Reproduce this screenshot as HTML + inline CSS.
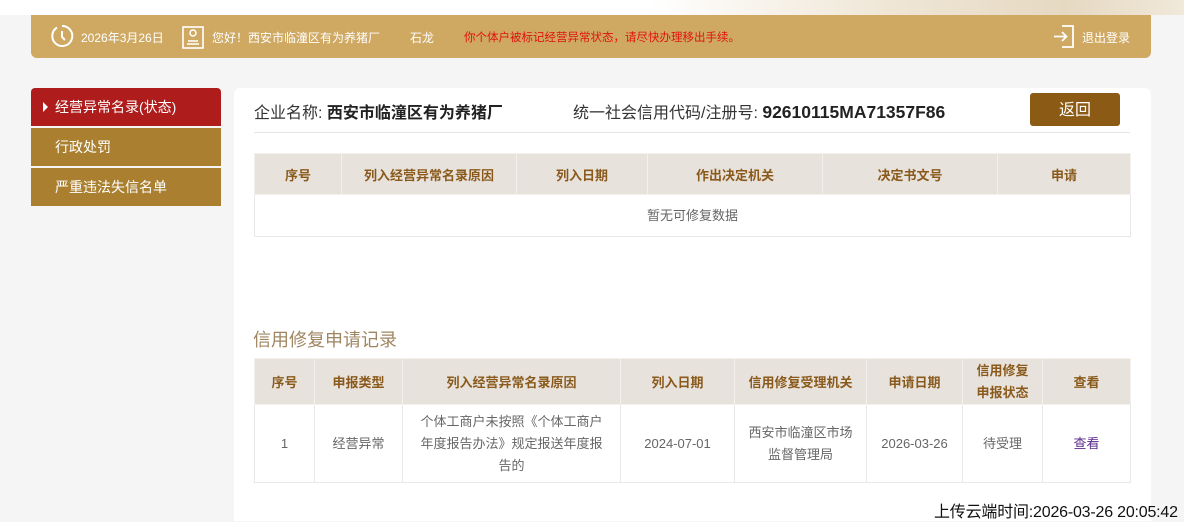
<!DOCTYPE html>
<html><head><meta charset="utf-8"><style>
*{margin:0;padding:0;box-sizing:border-box}
body{width:1184px;height:521px;overflow:hidden;background:#f5f5f5;font-family:"Liberation Sans","Noto Sans CJK SC",sans-serif;position:relative;font-size:13px}
.topbg{position:absolute;left:0;top:0;width:1184px;height:15px;background:linear-gradient(90deg,#fff 0,#fff 55%,#efe6d6 75%,#e6d9c2 90%,#f0e8da 100%)}
.hdr{position:absolute;left:31px;top:15px;width:1120px;height:43px;background:#cfa862;border-radius:0 0 6px 6px;color:#fff;font-size:12px}
.hdr span{position:absolute;top:14px;white-space:nowrap}
.side{position:absolute;left:31px;width:190px;height:38px;color:#fff;font-size:14px;line-height:38px;padding-left:24px}
.main{position:absolute;left:234px;top:88px;width:917px;height:433px;background:#fff;border-radius:6px 6px 0 0}
table{border-collapse:collapse;position:absolute;left:254px;width:876px;table-layout:fixed}
th{background:#e8e2dc;color:#8a5a1c;font-size:13px;font-weight:bold;border:1px solid #f4f0ec}
td{border:1px solid #e8e8e8;text-align:center;color:#666;font-size:13px;line-height:22px}
</style></head><body>
<div class="topbg"></div>
<div class="hdr">
<svg style="position:absolute;left:19px;top:9px" width="24" height="24" viewBox="0 0 24 24"><path d="M7 3.5A10 10 0 1 0 12 2" fill="none" stroke="#fff" stroke-width="2"/><path d="M12 7v6l3 3" fill="none" stroke="#fff" stroke-width="2"/></svg>
<span style="left:50px">2026年3月26日</span>
<svg style="position:absolute;left:151px;top:10px" width="22" height="24" viewBox="0 0 22 24"><rect x="1" y="2" width="20" height="21" fill="none" stroke="#fff" stroke-width="1.6"/><circle cx="11" cy="8" r="3" fill="none" stroke="#fff" stroke-width="1.5"/><path d="M6 16h10M5 19h12" stroke="#fff" stroke-width="1.5"/></svg>
<span style="left:181px">您好！西安市临潼区有为养猪厂</span>
<span style="left:379px">石龙</span>
<span style="left:433px;color:#e0140c;font-size:11.5px">你个体户被标记经营异常状态，请尽快办理移出手续。</span>
<svg style="position:absolute;left:1022px;top:9px" width="22" height="25" viewBox="0 0 22 25"><path d="M9 2h11v21H9" fill="none" stroke="#fff" stroke-width="1.8"/><path d="M1 12.5h12M9 8l4.5 4.5L9 17" fill="none" stroke="#fff" stroke-width="1.8"/></svg>
<span style="left:1051px">退出登录</span>
</div>
<div class="side" style="top:88px;background:#ae1c1c;border-radius:4px 4px 0 0;padding-left:24px">经营异常名录(状态)</div>
<div style="position:absolute;left:43px;top:102px;border-left:5px solid #fff;border-top:5px solid transparent;border-bottom:5px solid transparent"></div>
<div class="side" style="top:128px;background:#aa8030">行政处罚</div>
<div class="side" style="top:168px;background:#aa8030">严重违法失信名单</div>
<div class="main"></div>
<div style="position:absolute;left:254px;top:99px;font-size:16px;color:#333;white-space:nowrap">企业名称: <b style="color:#222">西安市临潼区有为养猪厂</b></div>
<div style="position:absolute;left:573px;top:99px;font-size:16px;color:#333;white-space:nowrap">统一社会信用代码/注册号: <b style="color:#222;font-size:17.5px">92610115MA71357F86</b></div>
<div style="position:absolute;left:1030px;top:93px;width:90px;height:33px;background:#8b5a14;border-radius:3px;color:#fff;font-size:16px;text-align:center;line-height:35px">返回</div>
<div style="position:absolute;left:254px;top:132px;width:876px;height:1px;background:#e5e5e5"></div>
<table style="top:153px"><colgroup><col width="87"><col width="175"><col width="131"><col width="175"><col width="175"><col width="133"></colgroup>
<tr style="height:41px"><th>序号</th><th>列入经营异常名录原因</th><th>列入日期</th><th>作出决定机关</th><th>决定书文号</th><th>申请</th></tr>
<tr style="height:42px"><td colspan="6">暂无可修复数据</td></tr></table>
<div style="position:absolute;left:253px;top:326px;font-size:18px;color:#a08660">信用修复申请记录</div>
<table style="top:358px"><colgroup><col width="60"><col width="88"><col width="218"><col width="114"><col width="132"><col width="96"><col width="80"><col width="88"></colgroup>
<tr style="height:46px"><th>序号</th><th>申报类型</th><th>列入经营异常名录原因</th><th>列入日期</th><th>信用修复受理机关</th><th>申请日期</th><th style="line-height:22px">信用修复<br>申报状态</th><th>查看</th></tr>
<tr style="height:78px"><td>1</td><td>经营异常</td><td style="padding:0 14px">个体工商户未按照《个体工商户年度报告办法》规定报送年度报告的</td><td>2024-07-01</td><td style="padding:0 8px">西安市临潼区市场监督管理局</td><td>2026-03-26</td><td>待受理</td><td style="color:#5a2a8a">查看</td></tr></table>
<div style="position:absolute;left:934px;top:498px;font-size:16px;color:#111;white-space:nowrap;letter-spacing:-0.2px">上传云端时间:2026-03-26 20:05:42</div>
</body></html>
